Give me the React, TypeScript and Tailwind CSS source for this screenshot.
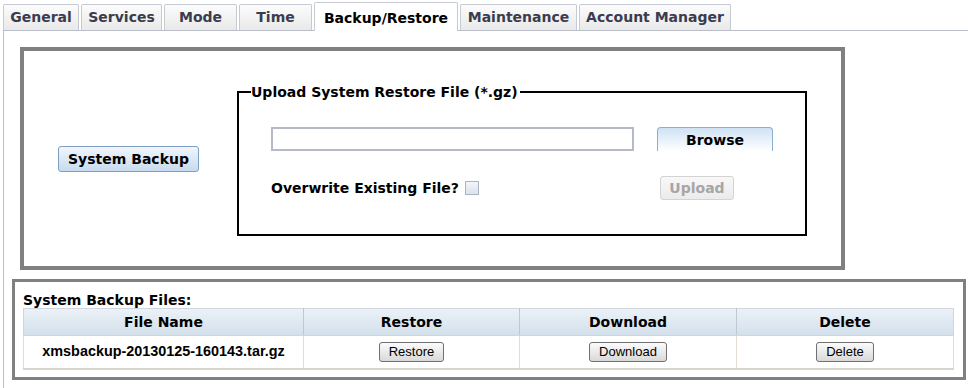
const tabs = [
  { label: 'General', w: 'w-[76px]' },
  { label: 'Services', w: 'w-[81px]' },
  { label: 'Mode', w: 'w-[73px]' },
  { label: 'Time', w: 'w-[73px]' },
  { label: 'Backup/Restore', w: 'w-[144px]', active: true },
  { label: 'Maintenance', w: 'w-[117px]' },
  { label: 'Account Manager', w: 'w-[152px]' },
];

const rows = [{ file: 'xmsbackup-20130125-160143.tar.gz' }];

const GrayButton = ({ label }: { label: string }) => (
  <button className="h-[20px] px-[9px] rounded-[3px] border border-[#707070] bg-gradient-to-b from-[#fbfbfb] to-[#d9d9d9] font-['Liberation_Sans',Arial,sans-serif] text-[13px] leading-[18px] text-black">
    {label}
  </button>
);

export default function App() {
  return (
    <div className="w-[968px] h-[388px] overflow-hidden bg-white font-['DejaVu_Sans',Verdana,sans-serif] text-[14px] font-bold">
      {/* tabs */}
      <div className="relative z-10 flex items-end gap-[2px] pl-[3px] h-[30px]">
        {tabs.map((t) =>
          t.active ? (
            <div
              key={t.label}
              className={`${t.w} h-[29px] -mb-px flex items-center justify-center pt-[2px] bg-white border border-b-0 border-[#c6cad2] rounded-t-[2px] text-black`}
            >
              {t.label}
            </div>
          ) : (
            <div
              key={t.label}
              className={`${t.w} h-[26px] flex items-center justify-center pb-[1px] bg-gradient-to-b from-[#fcfcfc] to-[#e9e9e9] border border-b-0 border-[#c6cad2] rounded-t-[2px] text-[#3b3c4e]`}
            >
              {t.label}
            </div>
          )
        )}
      </div>

      {/* panel */}
      <div className="ml-[3px] h-[358px] border-l border-t border-[#b9bec9] pt-[16px]">
        {/* backup / restore box */}
        <div className="ml-[16px] w-[825px] h-[223px] border-4 border-[#808080] flex items-start">
          <button className="ml-[34px] mt-[95px] w-[141px] h-[26px] rounded-[3px] border border-[#7f9fc2] bg-gradient-to-b from-[#f1f6fb] to-[#c8dbee] text-black leading-[22px]">
            System Backup
          </button>

          <fieldset className="ml-[38px] mt-[33px] w-[570px] h-[152px] border-2 border-black">
            <legend className="ml-[12px] pr-[2px] leading-[16px] text-black">
              Upload System Restore File (*.gz)
            </legend>
            <div className="flex items-start mt-[27px] pl-[32px]">
              <input
                type="text"
                className="w-[363px] h-[24px] border-2 border-[#b6bac8] bg-white outline-none"
              />
              <button className="ml-[23px] w-[116px] h-[24px] rounded-t-[4px] border border-b-0 border-[#8eaed0] bg-gradient-to-b from-[#cfe2f4] to-white text-black leading-[20px]">
                Browse
              </button>
            </div>
            <div className="flex items-center mt-[25px] pl-[32px] h-[24px]">
              <div className="w-[389px] flex items-center text-black">
                <span>Overwrite Existing File?</span>
                <span className="ml-[6px] w-[14px] h-[14px] border border-[#a9b4c4] bg-gradient-to-b from-[#f3f6f9] to-[#dbe2ea]" />
              </div>
              <button
                disabled
                className="w-[74px] h-[24px] rounded-[3px] border border-[#d3d3d3] bg-gradient-to-b from-[#f8f8f8] to-[#ebebeb] text-[#a6a6a6] leading-[20px]"
              >
                Upload
              </button>
            </div>
          </fieldset>
        </div>

        {/* backup files box */}
        <div className="ml-[8px] mt-[9px] w-[954px] h-[101px] border-[3px] border-[#808080] pl-[8px] pt-[10px]">
          <div className="leading-[16px] text-black">System Backup Files:</div>
          <table className="w-[931px] border-collapse table-fixed">
            <thead>
              <tr className="h-[27px] bg-gradient-to-b from-[#ecf1f7] to-[#d2e0eb]">
                <th className="w-[280px] border border-[#cfd6de] border-r-[#bcc8d4] text-black">File Name</th>
                <th className="w-[216px] border border-[#cfd6de] border-r-[#bcc8d4] text-black">Restore</th>
                <th className="w-[217px] border border-[#cfd6de] border-r-[#bcc8d4] text-black">Download</th>
                <th className="border border-[#cfd6de] text-black">Delete</th>
              </tr>
            </thead>
            <tbody>
              {rows.map((r) => (
                <tr key={r.file} className="h-[33px] border-b-2 border-[#d9d5cd]">
                  <td className="text-center border-l border-r border-[#e4ddd2] font-['Liberation_Sans',Arial,sans-serif] text-[14.4px] font-bold text-black">
                    {r.file}
                  </td>
                  <td className="text-center border-r border-[#e4ddd2] font-normal">
                    <GrayButton label="Restore" />
                  </td>
                  <td className="text-center border-r border-[#e4ddd2] font-normal">
                    <GrayButton label="Download" />
                  </td>
                  <td className="text-center border-r border-[#e4ddd2] font-normal">
                    <GrayButton label="Delete" />
                  </td>
                </tr>
              ))}
            </tbody>
          </table>
        </div>
      </div>
    </div>
  );
}
